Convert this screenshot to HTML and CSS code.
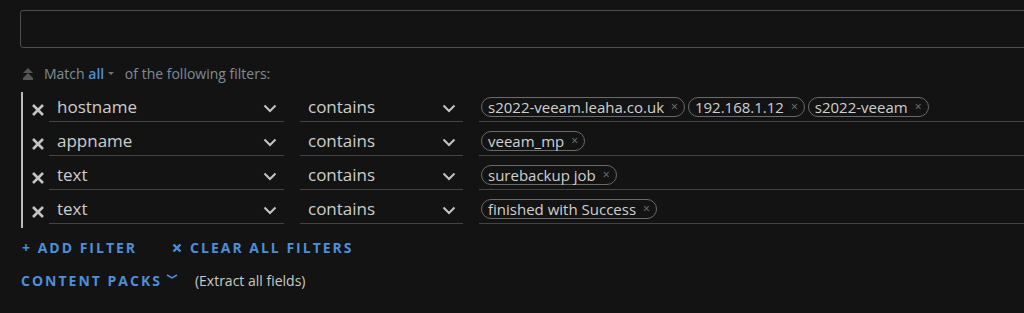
FILE: index.html
```html
<!DOCTYPE html>
<html lang="en">
<head>
    <meta charset="UTF-8">
    <title>Filters</title>
    <link rel="stylesheet" href="styles.css">
</head>
<body>
<div class="page">
    <div class="query-box"></div>

    <div class="match">
        <svg class="collapse" width="12" height="13" viewBox="0 0 12 13">
            <path d="M6 1 L11 6 H1 Z" fill="#555"/>
            <path d="M6 6 L11 11 H1 Z" fill="#555"/>
            <rect x="1" y="11" width="10" height="2" fill="#555"/>
        </svg>
        <span>Match <b class="all">all</b><span class="caret"></span> of the following filters:</span>
    </div>

    <div class="filters">
        <div class="filter">
            <svg class="remove" viewBox="0 0 14 14"><path d="M2 2 L12 12 M12 2 L2 12" /></svg>
            <div class="select field">hostname<svg class="chev" viewBox="0 0 14 9"><path d="M1.5 1.5 L7 7 L12.5 1.5" /></svg></div>
            <div class="select op">contains<svg class="chev" viewBox="0 0 14 9"><path d="M1.5 1.5 L7 7 L12.5 1.5" /></svg></div>
            <div class="values">
                <span class="tag">s2022-veeam.leaha.co.uk<i>&times;</i></span>
                <span class="tag">192.168.1.12<i>&times;</i></span>
                <span class="tag">s2022-veeam<i>&times;</i></span>
            </div>
        </div>
        <div class="filter">
            <svg class="remove" viewBox="0 0 14 14"><path d="M2 2 L12 12 M12 2 L2 12" /></svg>
            <div class="select field">appname<svg class="chev" viewBox="0 0 14 9"><path d="M1.5 1.5 L7 7 L12.5 1.5" /></svg></div>
            <div class="select op">contains<svg class="chev" viewBox="0 0 14 9"><path d="M1.5 1.5 L7 7 L12.5 1.5" /></svg></div>
            <div class="values">
                <span class="tag">veeam_mp<i>&times;</i></span>
            </div>
        </div>
        <div class="filter">
            <svg class="remove" viewBox="0 0 14 14"><path d="M2 2 L12 12 M12 2 L2 12" /></svg>
            <div class="select field">text<svg class="chev" viewBox="0 0 14 9"><path d="M1.5 1.5 L7 7 L12.5 1.5" /></svg></div>
            <div class="select op">contains<svg class="chev" viewBox="0 0 14 9"><path d="M1.5 1.5 L7 7 L12.5 1.5" /></svg></div>
            <div class="values">
                <span class="tag">surebackup job<i>&times;</i></span>
            </div>
        </div>
        <div class="filter">
            <svg class="remove" viewBox="0 0 14 14"><path d="M2 2 L12 12 M12 2 L2 12" /></svg>
            <div class="select field">text<svg class="chev" viewBox="0 0 14 9"><path d="M1.5 1.5 L7 7 L12.5 1.5" /></svg></div>
            <div class="select op">contains<svg class="chev" viewBox="0 0 14 9"><path d="M1.5 1.5 L7 7 L12.5 1.5" /></svg></div>
            <div class="values">
                <span class="tag">finished with Success<i>&times;</i></span>
            </div>
        </div>
    </div>

    <div class="actions">
        <a class="link add">+ ADD FILTER</a>
        <a class="link clear"><svg class="x" viewBox="0 0 10 10"><path d="M1.5 1.5 L8.5 8.5 M8.5 1.5 L1.5 8.5" /></svg>CLEAR ALL FILTERS</a>
    </div>

    <div class="packs">
        <a class="link">CONTENT PACKS</a>
        <svg class="packs-chev" width="12" height="6" viewBox="0 0 12 6"><path d="M1 1 L6 4 L11 1" /></svg>
        <span class="extract">(Extract all fields)</span>
    </div>
</div>
</body>
</html>
```

FILE: styles.css
```css
body { margin: 0; background: #131313; font-family: "Open Sans", sans-serif; color: #c9c9c9; overflow: hidden; }
.page { padding: 10px 0 0 20px; }

.query-box { height: 36px; margin-right: -10px; border: 1px solid #4e4e4e; border-radius: 3px; }

.match { display: flex; align-items: center; height: 20px; margin-top: 15px; font-size: 14px; color: #7f8c97; }
.match .collapse { margin: 0 10px 0 2px; }
.match .all { color: #4d8fd8; font-weight: 600; }
.caret { display: inline-block; width: 0; height: 0; margin: 0 7px 2px 4px; vertical-align: middle;
    border-left: 3px solid transparent; border-right: 3px solid transparent; border-top: 3px solid #6c7680; }

.filters { margin-top: 9px; border-left: 2px solid #bdbdbd; margin-left: 1px; }
.filter { display: flex; align-items: flex-start; height: 34px; }
.remove { width: 14px; height: 14px; margin: 11px 4px 0 8px; fill: none; stroke: #c4c4c4; stroke-width: 2.6; }
.select { display: flex; align-items: center; justify-content: space-between; height: 30px; padding: 0 7px 0 8px;
    border-bottom: 1px solid #444; font-size: 17px; color: #cdcdcd; box-sizing: border-box; }
.field { width: 235px; }
.op { width: 163px; margin-left: 16px; }
.chev { width: 14px; height: 9px; fill: none; stroke: #c4c4c4; stroke-width: 2; margin-top: 3px; }
.values { flex: 1; display: flex; gap: 3px; align-items: center; height: 30px; margin-left: 16px;
    padding-left: 2px; border-bottom: 1px solid #444; box-sizing: border-box; }
.tag { display: inline-flex; align-items: center; height: 20px; box-sizing: border-box; padding: 0 6px 0 6px;
    border: 1px solid #6a6a6a; border-radius: 10px; font-size: 15px; color: #d0d0d0; }
.tag i { font-style: normal; font-size: 12px; color: #7a7a7a; margin-left: 7px; }

.actions { display: flex; gap: 35px; margin-top: 10px; margin-left: 2px; }
.link { font-size: 14px; font-weight: 700; letter-spacing: 2px; color: #4d8fd8; }
.clear { display: flex; align-items: center; }
.clear .x { width: 10px; height: 10px; fill: none; stroke: #4d8fd8; stroke-width: 2.4; margin-right: 8px; }

.packs { display: flex; align-items: center; margin-top: 14px; margin-left: 1px; }
.packs-chev { fill: none; stroke: #4d8fd8; stroke-width: 1.5; margin: 0 17px 8px 4px; }
.extract { font-size: 14px; color: #c9c9c9; }
```
